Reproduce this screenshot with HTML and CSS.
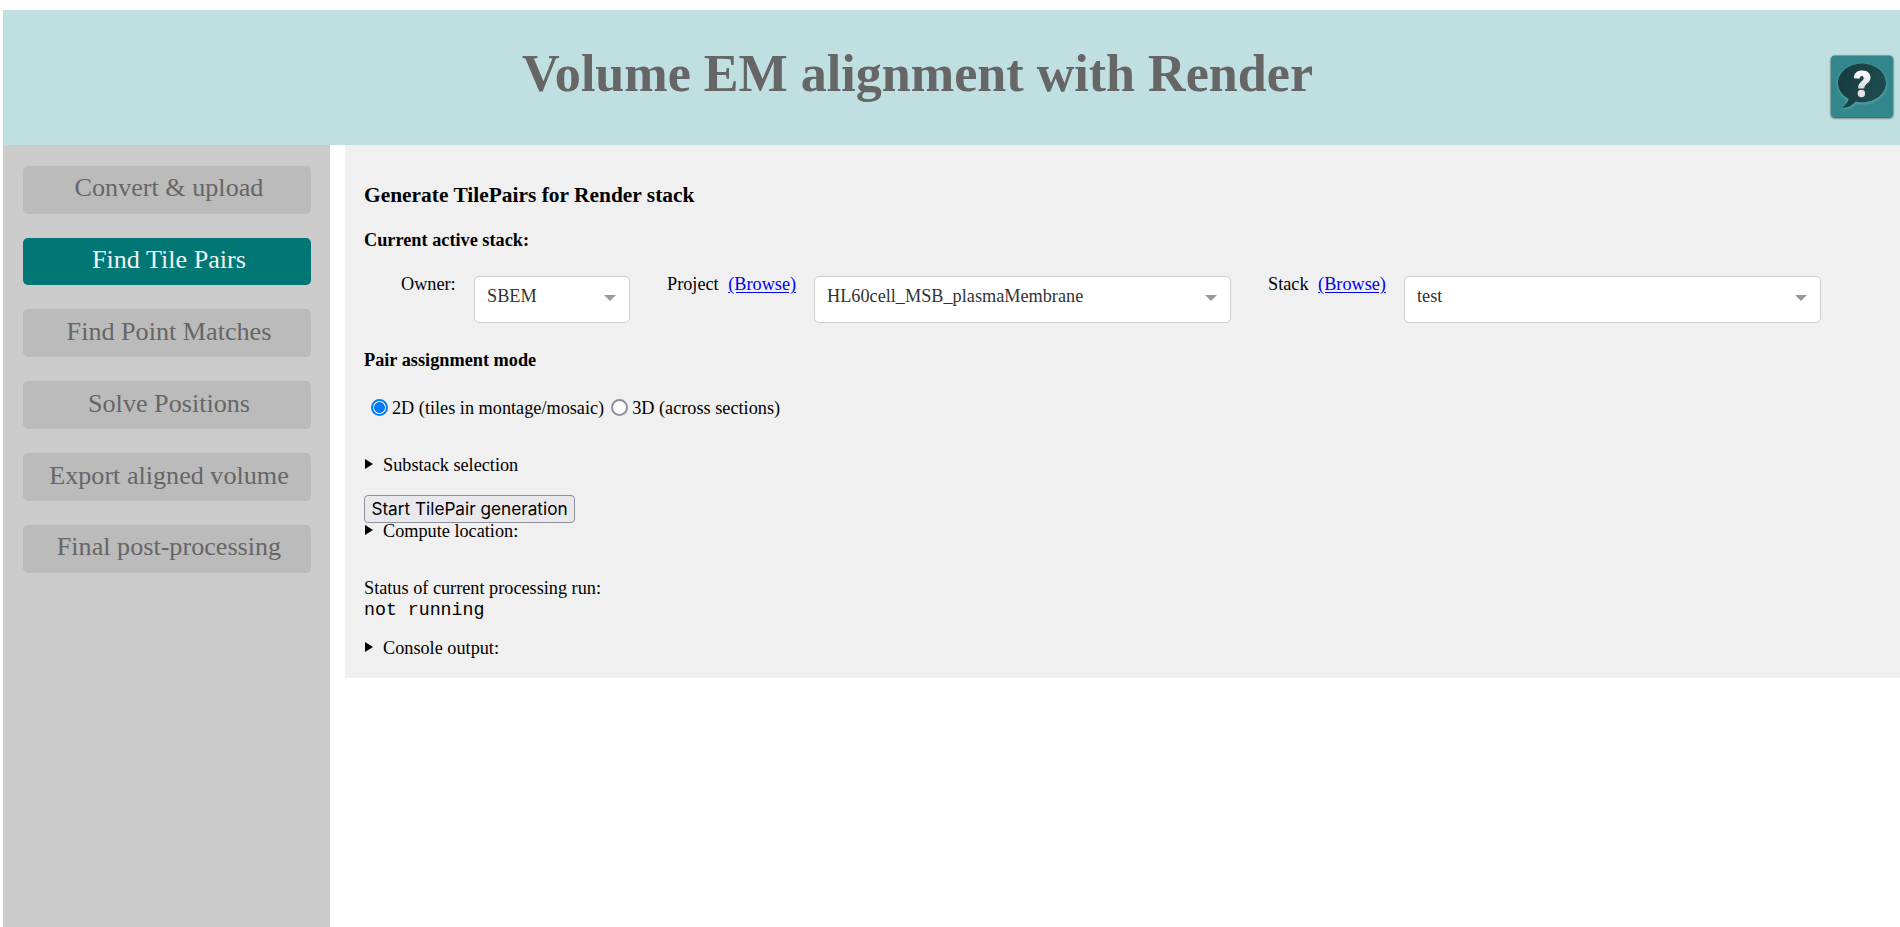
FILE: index.html
```html
<!DOCTYPE html>
<html lang="en">
<head>
<meta charset="utf-8">
<title>Volume EM alignment with Render</title>
<link rel="stylesheet" href="styles.css">
</head>
<body>
<header class="header">
  <h1 class="title"><span>Volume EM alignment with Render</span></h1>
  <a class="help" href="#" aria-label="Help">
    <svg width="68" height="68" viewBox="0 0 68 68">
      <defs>
        <linearGradient id="bubble" x1="0" y1="0" x2="1" y2="0.3"><stop offset="0" stop-color="#163a3e"/><stop offset="1" stop-color="#1f4b4f"/></linearGradient>
        <linearGradient id="mark" x1="0" y1="0" x2="0" y2="1"><stop offset="0" stop-color="#fff"/><stop offset="1" stop-color="#dcdcdc"/></linearGradient>
        <filter id="shadow" x="-10%" y="-10%" width="120%" height="125%"><feDropShadow dx="0" dy="1" stdDeviation="1" flood-color="#000" flood-opacity="0.8"/></filter>
        <filter id="glow" x="-20%" y="-20%" width="140%" height="140%"><feDropShadow dx="0" dy="1" stdDeviation="1.5" flood-color="#7cc4c6" flood-opacity="0.6"/></filter>
      </defs>
      <rect x="3" y="3.500" width="62" height="61.500" rx="4" fill="#33878c" filter="url(#shadow)"/>
      <path d="M34 11.500C47.500 11.500 58 20.500 58 31S47.500 50.500 34 50.500C31.500 50.500 29.500 50.200 27.500 49.700C24.500 53.500 19.500 56.500 14 55.500C17.500 53.500 19.500 50.500 20.500 47C14 43.500 10 38 10 31C10 20.500 20.500 11.500 34 11.500Z" fill="url(#bubble)" filter="url(#glow)"/>
      <path d="M25.800 26.200C26 21 29 18.500 34.200 18.500C39.500 18.500 42.500 21.300 42.500 25.500C42.500 31.500 36.300 31.300 36.300 36.500H30.200C29.800 30 35.700 29.500 35.700 26.100C35.700 23.100 31.800 23.200 31.600 26.700Z" fill="url(#mark)"/>
      <circle cx="33.400" cy="41.500" r="3.700" fill="#e4e4e4"/>
    </svg>
  </a>
</header>
<div class="main">
  <nav class="sidebar">
    <a class="tab">Convert &amp; upload</a>
    <a class="tab tab-active">Find Tile Pairs</a>
    <a class="tab">Find Point Matches</a>
    <a class="tab">Solve Positions</a>
    <a class="tab">Export aligned volume</a>
    <a class="tab">Final post-processing</a>
  </nav>
  <main class="content">
    <h3 class="heading">Generate TilePairs for Render stack</h3>
    <h4 class="subheading">Current active stack:</h4>
    <div class="stack-row">
      <div class="field"><span class="label owner-label">Owner:</span>
        <div class="dropdown dropdown-small"><span>SBEM</span><i class="arrow"></i></div></div>
      <div class="field"><span class="label browse-label">Project <a class="browse" href="#">(Browse)</a></span>
        <div class="dropdown"><span>HL60cell_MSB_plasmaMembrane</span><i class="arrow"></i></div></div>
      <div class="field"><span class="label browse-label stack-label">Stack <a class="browse" href="#">(Browse)</a></span>
        <div class="dropdown"><span>test</span><i class="arrow"></i></div></div>
    </div>
    <h4 class="subheading mode-heading">Pair assignment mode</h4>
    <div class="radios">
      <label class="choice"><i class="radio radio-on"></i><span>2D (tiles in montage/mosaic)</span></label>
      <label class="choice"><i class="radio"></i><span>3D (across sections)</span></label>
    </div>
    <div class="details substack"><i class="triangle"></i>Substack selection</div>
    <button class="start" type="button">Start TilePair generation</button>
    <div class="details compute"><i class="triangle"></i>Compute location:</div>
    <div class="status">Status of current processing run:</div>
    <div class="state">not running</div>
    <div class="details console"><i class="triangle"></i>Console output:</div>
  </main>
</div>
</body>
</html>
```

FILE: styles.css
```css
* { box-sizing: border-box; }
body {
  margin: 0;
  padding: 10px 0 0 3px;
  height: 927px;
  overflow: hidden;
  display: flex;
  flex-direction: column;
  background: #fff;
  color: #000;
  font: 18.240px/20px "Liberation Serif", "Times New Roman", serif;
}
.header {
  display: flex;
  align-items: flex-start;
  height: 135px;
  flex: none;
  background: #bfdfe0;
}
.title {
  flex: 1;
  margin: 34px 0 0 519px;
  font-size: 52.100px;
  line-height: 60px;
  color: #666;
  white-space: nowrap;
}
.help { width: 68px; height: 68px; margin: 42px 4px 0 0; }
.help svg { display: block; }
.main { display: flex; flex: 1; }
.sidebar {
  width: 327px;
  margin-right: 15px;
  padding: 21px 19px 0 20px;
  display: flex;
  flex-direction: column;
  gap: 24px;
  background: #ccc;
}
.tab {
  height: 48px;
  padding: 7px 0 0 4px;
  border-radius: 5px;
  background: #bbb;
  color: #666;
  font-size: 26.150px;
  line-height: 30px;
  text-align: center;
  white-space: nowrap;
}
.tab-active { background: #007775; color: #f0f0f0; height: 47px; }
.tab-active ~ .tab:not(:last-child) { padding-top: 8px; }
.content {
  flex: 1;
  align-self: flex-start;
  height: 533px;
  padding: 38px 0 0 19px;
  background: #f0f0f0;
  white-space: nowrap;
}
.heading { margin: 0; font-size: 21.430px; line-height: 24px; }
.subheading { margin: 23px 0 0; font-size: 18.280px; line-height: 20px; }
.stack-row { display: flex; margin-top: 24px; padding-left: 37px; height: 49px; gap: 37px; }
.field { display: flex; }
.owner-label { width: 73px; }
.browse-label { width: 147px; }
.stack-label { width: 136px; }
.browse { margin-left: 5px; color: #00e; text-underline-offset: 2px; }
.dropdown {
  width: 417px;
  height: 47px;
  margin-top: 2px;
  padding: 10px 13px 0 12px;
  display: flex;
  justify-content: space-between;
  background: #fff;
  border: 1px solid #ccc;
  border-radius: 5px;
  color: #333;
  line-height: 18px;
}
.dropdown-small { width: 156px; }
.arrow {
  margin-top: 8px;
  height: 6px;
  border: 6px solid transparent;
  border-top-color: #999;
  border-bottom: 0;
}
.mode-heading { margin-top: 27px; }
.radios { display: flex; gap: 7px; margin: 28px 0 0 7px; }
.choice { display: flex; gap: 4px; }
.radio { width: 17px; height: 17px; margin-top: 1px; border: 2px solid #8f8f9d; border-radius: 50%; background: #fff; }
.radio-on { border-color: #007aff; background: radial-gradient(circle, #007aff 5px, #fff 5.800px); }
.details { display: flex; gap: 10px; }
.triangle { margin: 4px 0 0 1px; height: 10px; border: 5px solid transparent; border-left: 8px solid #000; border-right: 0; }
.substack { margin-top: 37px; }
.start {
  display: block;
  width: 211px;
  height: 28px;
  margin: 20px 0 0;
  padding: 0;
  border: 1px solid #8f8f9d;
  border-radius: 4px;
  background: #e9e9ed;
  color: #000;
  font: 17.200px/26px Inter, sans-serif;
  text-align: center;
}
.compute { margin-top: -2px; }
.status { margin-top: 37px; }
.state { margin-top: 2px; font-family: "Liberation Mono", "Courier New", monospace; }
.console { margin-top: 18px; }
```
